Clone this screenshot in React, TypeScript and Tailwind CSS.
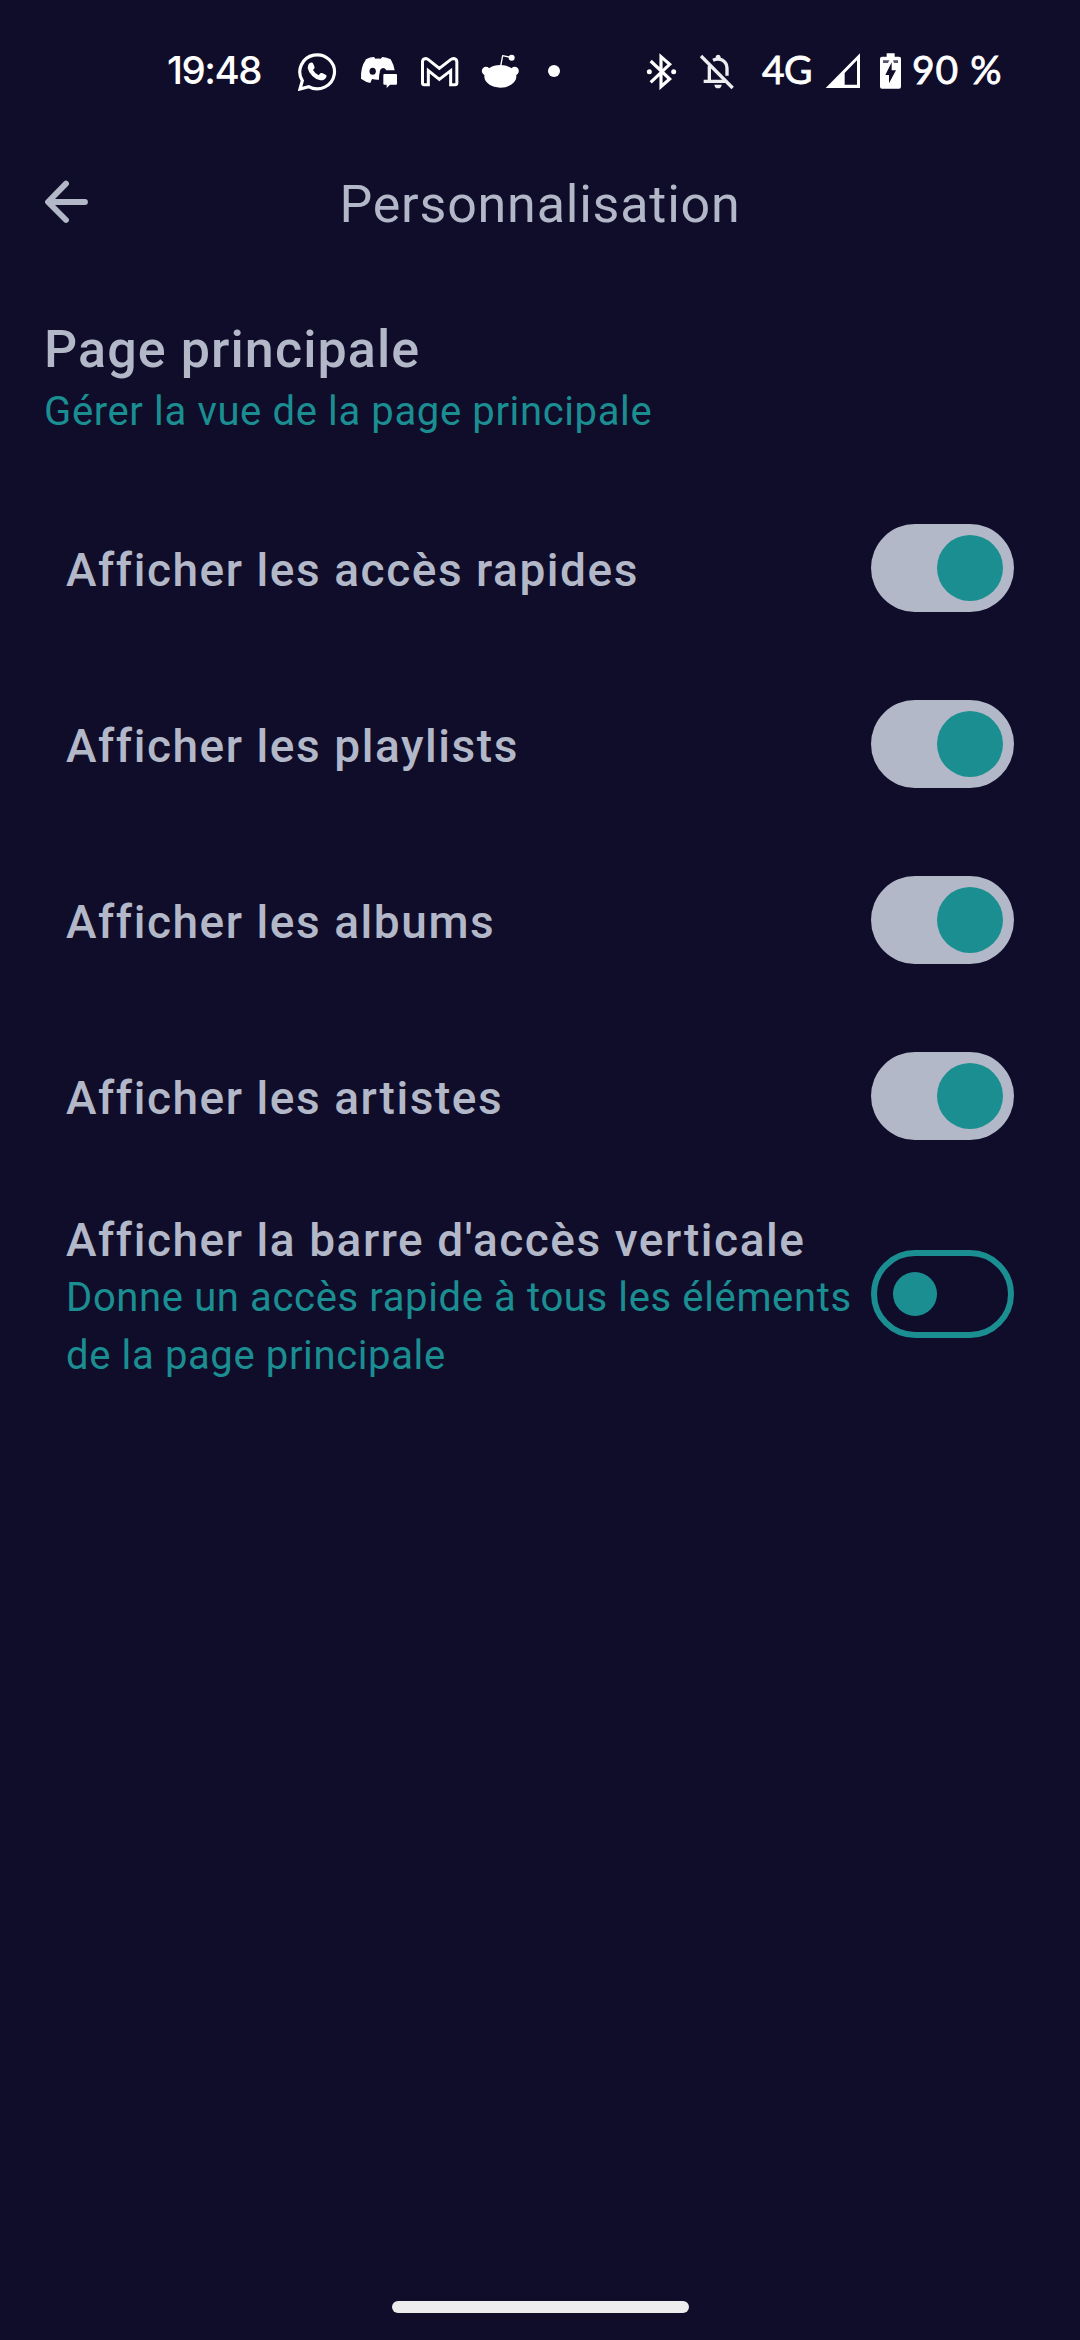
import { useState } from 'react';
import type { ReactNode } from 'react';

const ink = '#100D2B';

function Glyph({ box, className, children }: { box: string; className: string; children: ReactNode }) {
  return (
    <svg viewBox={box} className={`block shrink-0 ${className}`} fill="none" aria-hidden="true">
      {children}
    </svg>
  );
}

function WhatsAppIcon() {
  return (
    <Glyph box="444 36 117 117" className="h-[39px] w-[39px]">
      <path d="M450 147 L457 122 A52 51 0 1 1 476 140 Z" stroke="white" strokeWidth="9.5" strokeLinejoin="miter" />
      <path
        d="M479 69 Q487 65 490 72 L494 82 Q494 86 489 90 Q495 101 506 106 L511 100 Q514 98 518 100 L528 105 Q531 107 529 111 Q524 122 511 121 Q498 119 487 108 Q475 96 473 84 Q473 74 479 69 Z"
        fill="white"
      />
    </Glyph>
  );
}

function DiscordIcon() {
  return (
    <Glyph box="60 48 114 102" className="h-[34px] w-[38px]">
      <path
        d="M78 61 Q90 54 102 54 L106 59 Q114 58 122 59 L127 54 Q140 55 152 61 Q161 76 164 94 L139 94 Q136 87 129 87 Q119 88 119 103 Q117 106 117 122 Q107 123 97 120 L95 122 L91 132 Q77 129 63 119 Q61 86 78 61 Z"
        fill="white"
      />
      <ellipse cx="98" cy="97" rx="9.5" ry="10.5" fill={ink} />
      <path
        d="M133 105 H168 Q171 105 171 108 V134 Q171 137 168 137 H150 L140 147 V137 H133 Q130 137 130 134 V108 Q130 105 133 105 Z"
        fill="white"
      />
    </Glyph>
  );
}

function GmailIcon() {
  return (
    <Glyph box="240 45 117 93" className="h-[31px] w-[39px]">
      <path
        d="M247.5 127 V62 Q248 53 257 52.5 Q261 53 265 56 L298 82 L332 56 Q336 53 341 52.5 Q350 54 350.5 62 V127 Q350 131 346 131 H332 V89 L298 115 L265 89 V131 H252 Q248 131 247.5 127 Z"
        stroke="white"
        strokeWidth="9"
        strokeLinejoin="miter"
      />
    </Glyph>
  );
}

function RedditIcon() {
  return (
    <Glyph box="423 42 117 105" className="h-[35px] w-[39px]">
      <ellipse cx="481" cy="109" rx="48" ry="34" fill="white" />
      <circle cx="438" cy="93" r="12.5" fill="white" />
      <circle cx="524" cy="93" r="12.5" fill="white" />
      <path d="M482 78 L488 47 L511 52" stroke="white" strokeWidth="4" strokeLinejoin="round" />
      <circle cx="515" cy="53" r="9" fill="white" />
    </Glyph>
  );
}

function BluetoothIcon() {
  return (
    <Glyph box="75 36 93 111" className="h-[37px] w-[31px]">
      <path d="M89 60 L146 114 L120 137 V47 L146 70 L89 124" stroke="white" strokeWidth="9.5" />
      <circle cx="85" cy="92" r="7.5" fill="white" />
      <circle cx="158" cy="92" r="7.5" fill="white" />
    </Glyph>
  );
}

function BellOffIcon() {
  return (
    <Glyph box="234 39 108 111" className="h-[37px] w-[36px]">
      <g stroke="#EDEDF0" strokeWidth="10">
        <path d="M240 48 L335 144" />
        <path d="M265 78 V124 M248 124 H312" />
        <path d="M276 61 Q291 54 305 61 Q318 69 318 85 V107" />
      </g>
      <path d="M284 60 V51 Q285 44 291 44 Q298 44 299 51 V60 Z" fill="#EDEDF0" />
      <path d="M280 134 H302 Q301 145 291 145 Q281 145 280 134 Z" fill="#EDEDF0" />
    </Glyph>
  );
}

function SignalIcon() {
  return (
    <Glyph box="72 39 108 108" className="h-[36px] w-[36px]">
      <path fillRule="evenodd" d="M74 144 L177 40 V144 Z M131 99 L168 61 V134 H131 Z" fill="white" />
    </Glyph>
  );
}

function BatteryIcon() {
  return (
    <Glyph box="234 39 69 111" className="h-[37px] w-[23px]">
      <path
        d="M257 40 H281 V50 H294 Q300 50 300 56 V140 Q300 146 294 146 H243 Q237 146 237 140 V56 Q237 50 243 50 H257 Z"
        fill="white"
      />
      <path d="M246 61 H265 L261 69 H246 Z M276 61 H291 V69 H279 Z" fill="#55526B" />
      <path d="M272 67 V91 H285 L264 130 V105 H253 Z" fill={ink} />
    </Glyph>
  );
}

function StatusBar() {
  return (
    <div className="flex h-[142px] items-center pl-[167px] font-[Lato,sans-serif] text-[39px] leading-none text-white">
      <span className="mb-[2px] w-[131px] font-[Inter,sans-serif] text-[38.5px] font-medium tracking-[-1.5px]">19:48</span>
      <WhatsAppIcon />
      <div className="mt-[2px] ml-[23px]">
        <DiscordIcon />
      </div>
      <div className="ml-[22px]">
        <GmailIcon />
      </div>
      <div className="ml-[22px]">
        <RedditIcon />
      </div>
      <div className="ml-[28px] h-3 w-3 rounded-full bg-white" />
      <div className="ml-[86px]">
        <BluetoothIcon />
      </div>
      <div className="ml-[22px]">
        <BellOffIcon />
      </div>
      <span className="mb-[3px] ml-[27px] w-[63px] tracking-[-0.5px] [-webkit-text-stroke:0.8px_white]">4G</span>
      <SignalIcon />
      <div className="ml-[18px]">
        <BatteryIcon />
      </div>
      <span className="mb-[3px] ml-[10px] tracking-[1px] whitespace-nowrap [-webkit-text-stroke:0.8px_white]">90 %</span>
    </div>
  );
}

function Header() {
  return (
    <header className="grid h-[124px] grid-cols-[1fr_auto_1fr] items-center px-[44px]">
      <button aria-label="Retour" className="mb-[4px]">
        <Glyph box="42 60 135 132" className="h-[44px] w-[45px]">
          <path
            d="M108 71 L54 126 L108 180 M57 126 H165"
            stroke="#B3B8C8"
            strokeWidth="17.5"
            strokeLinecap="round"
            strokeLinejoin="round"
          />
        </Glyph>
      </button>
      <h1 className="pt-[2px] text-[52px] leading-[66px] tracking-[0.8px]">Personnalisation</h1>
    </header>
  );
}

function Toggle({ on, onChange }: { on: boolean; onChange: () => void }) {
  return (
    <button
      role="switch"
      aria-checked={on}
      onClick={onChange}
      className={
        on
          ? 'flex h-[88px] w-[143px] shrink-0 items-center justify-end rounded-full bg-[#B3B8C8] pr-[11px]'
          : 'flex h-[88px] w-[143px] shrink-0 items-center rounded-full border-6 border-[#1B8E92] pl-4'
      }
    >
      <span className={on ? 'h-[66px] w-[66px] rounded-full bg-[#1B8E92]' : 'h-11 w-11 rounded-full bg-[#1B8E92]'} />
    </button>
  );
}

type Setting = { label: string; hint?: string; on: boolean };

const initial: Setting[] = [
  { label: 'Afficher les accès rapides', on: true },
  { label: 'Afficher les playlists', on: true },
  { label: 'Afficher les albums', on: true },
  { label: 'Afficher les artistes', on: true },
  {
    label: "Afficher la barre d'accès verticale",
    hint: 'Donne un accès rapide à tous les éléments de la page principale',
    on: false,
  },
];

export default function App() {
  const [settings, setSettings] = useState(initial);
  const flip = (i: number) => setSettings((list) => list.map((s, n) => (n === i ? { ...s, on: !s.on } : s)));

  return (
    <div className="flex h-[2340px] w-[1080px] flex-col overflow-hidden bg-[#100D2B] font-[Roboto,sans-serif] text-[#B3B8C8]">
      <StatusBar />
      <Header />
      <main className="flex-1 pt-[51px]">
        <div className="h-[163px] px-[44px]">
          <h2 className="text-[52px] leading-[66px] font-medium tracking-[1.1px]">Page principale</h2>
          <p className="text-[40px] leading-[58px] tracking-[0.63px] text-[#1B8E92]">Gérer la vue de la page principale</p>
        </div>
        {settings.map((s, i) => (
          <div key={s.label} className={s.hint ? 'flex h-[220px] items-center px-[66px]' : 'flex h-[176px] items-center px-[66px]'}>
            <div className={s.hint ? 'flex-1 pt-[8px]' : 'flex-1 pt-[4px]'}>
              <h3 className="text-[46px] leading-[57px] font-medium tracking-[1.55px]">{s.label}</h3>
              {s.hint && (
                <p className="text-[40px] leading-[58px] tracking-[0.63px] text-[#1B8E92]">{s.hint}</p>
              )}
            </div>
            <Toggle on={s.on} onChange={() => flip(i)} />
          </div>
        ))}
      </main>
      <div className="mb-[27px] h-3 w-[297px] self-center rounded-full bg-[#ECECEE]" />
    </div>
  );
}
